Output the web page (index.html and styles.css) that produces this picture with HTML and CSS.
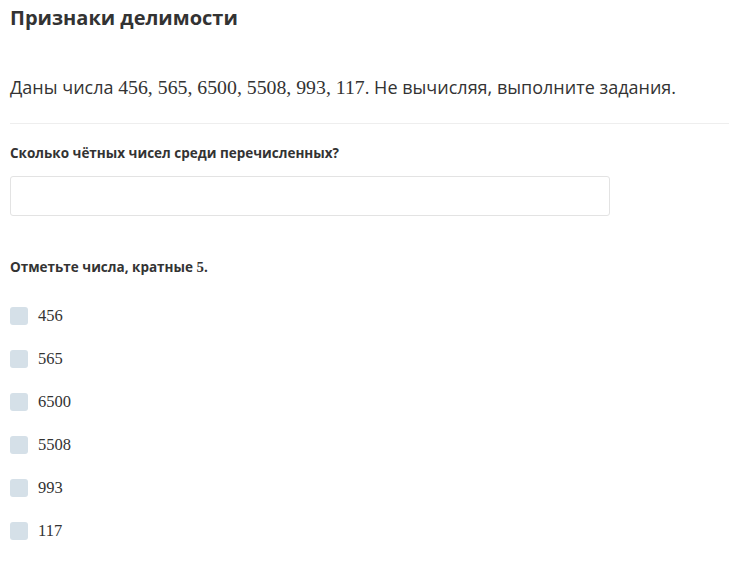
FILE: index.html
```html
<!DOCTYPE html>
<html lang="ru">
<head>
  <meta charset="UTF-8" />
  <title>Признаки делимости</title>
  <link rel="stylesheet" href="styles.css">
</head>
<body>

  <h2 class="title">Признаки делимости</h2>

  <p class="intro">Даны числа <span class="num">456, 565, 6500, 5508, 993, 117</span>. Не вычисляя, выполните задания.</p>

  <div class="task">
    <div class="question">Сколько чётных чисел среди перечисленных?</div>
    <input type="text" class="answer" />
  </div>

  <div class="task">
    <div class="question">Отметьте числа, кратные <span class="num">5</span>.</div>
    <ul class="options">
      <li><span class="box"></span><span class="num">456</span></li>
      <li><span class="box"></span><span class="num">565</span></li>
      <li><span class="box"></span><span class="num">6500</span></li>
      <li><span class="box"></span><span class="num">5508</span></li>
      <li><span class="box"></span><span class="num">993</span></li>
      <li><span class="box"></span><span class="num">117</span></li>
    </ul>
  </div>

</body>
</html>
```

FILE: styles.css
```css
body {
  margin: 0;
  padding: 0 0 0 10px;
  font-family: "Open Sans", sans-serif;
  color: #333;
  background: #fff;
}
.title {
  margin: 0;
  padding-top: 4px;
  font-size: 20px;
  line-height: 28px;
  font-weight: 700;
}
.intro {
  margin: 0;
  padding: 41px 0 22px;
  font-size: 18px;
  line-height: 28px;
  border-bottom: 1px solid #eee;
}
.num {
  font-family: "Liberation Serif", serif;
  font-size: 1.1em;
}
.task {
  padding-top: 19px;
}
.question {
  font-size: 13.5px;
  font-weight: 700;
  line-height: 20px;
}
.answer {
  display: block;
  box-sizing: border-box;
  width: 600px;
  height: 40px;
  margin: 13px 0 22px;
  border: 1px solid #e3e3e3;
  border-radius: 3px;
}
.options {
  list-style: none;
  margin: 17px 0 0;
  padding: 0;
}
.options li {
  display: flex;
  align-items: center;
  gap: 10px;
  height: 43px;
  font-size: 15px;
}
.box {
  width: 18px;
  height: 18px;
  border-radius: 3px;
  background: #d5e0e8;
}
```
